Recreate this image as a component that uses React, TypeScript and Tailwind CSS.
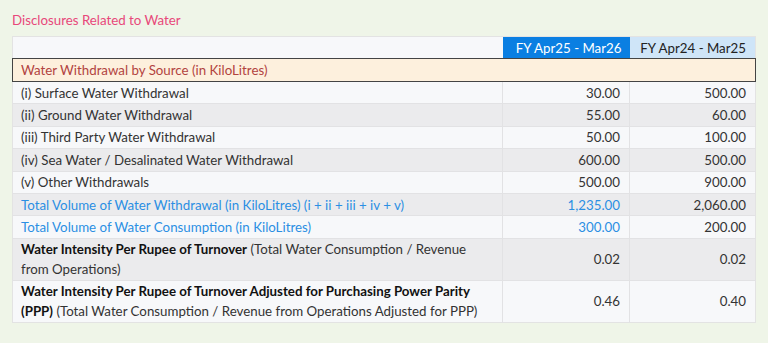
import React from 'react';

type Row = {
  label: React.ReactNode;
  cur: string;
  prev: string;
  blue?: boolean;
  tall?: boolean;
};

const rows: Row[] = [
  { label: '(i) Surface Water Withdrawal', cur: '30.00', prev: '500.00' },
  { label: '(ii) Ground Water Withdrawal', cur: '55.00', prev: '60.00' },
  { label: '(iii) Third Party Water Withdrawal', cur: '50.00', prev: '100.00' },
  { label: '(iv) Sea Water / Desalinated Water Withdrawal', cur: '600.00', prev: '500.00' },
  { label: '(v) Other Withdrawals', cur: '500.00', prev: '900.00' },
  {
    label: 'Total Volume of Water Withdrawal (in KiloLitres) (i + ii + iii + iv + v)',
    cur: '1,235.00',
    prev: '2,060.00',
    blue: true,
  },
  { label: 'Total Volume of Water Consumption (in KiloLitres)', cur: '300.00', prev: '200.00', blue: true },
  {
    label: (
      <>
        <span className="font-bold text-[#111]">Water Intensity Per Rupee of Turnover</span> (Total Water Consumption /
        Revenue from Operations)
      </>
    ),
    cur: '0.02',
    prev: '0.02',
    tall: true,
  },
  {
    label: (
      <>
        <span className="font-bold text-[#111]">
          Water Intensity Per Rupee of Turnover Adjusted for Purchasing Power Parity (PPP)
        </span>{' '}
        (Total Water Consumption / Revenue from Operations Adjusted for PPP)
      </>
    ),
    cur: '0.46',
    prev: '0.40',
    tall: true,
  },
];

const App: React.FC = () => {
  return (
    <div
      className="w-[768px] h-[343px] bg-[#eff5e8] pt-[11px] pl-[12px] text-[13.3px] text-[#333]"
      style={{ fontFamily: 'Lato, "Open Sans", sans-serif' }}
    >
      <h2 className="text-[#e8487a] text-[13.3px] leading-[18px] mb-[7px]">Disclosures Related to Water</h2>
      <table className="w-[743px] border-collapse table-fixed border border-[#e3e3e3] bg-[#f7f8fa]">
        <colgroup>
          <col className="w-[490px]" />
          <col className="w-[127px]" />
          <col className="w-[126px]" />
        </colgroup>
        <thead>
          <tr>
            <th className="h-[22px] p-0 bg-[#f7f8fa]" />
            <th className="h-[22px] p-0 bg-[#0a7fe2] text-white font-normal text-right pr-[8px] leading-[18px]">
              FY Apr25 - Mar26
            </th>
            <th className="h-[22px] p-0 bg-[#cfe5f8] text-[#222] font-normal text-right pr-[9px] leading-[18px]">
              FY Apr24 - Mar25
            </th>
          </tr>
        </thead>
        <tbody>
          <tr>
            <td
              colSpan={3}
              className="h-[23px] p-0 border border-[#444] bg-[#fdf0dd] text-[#b2433f] pl-[8px] leading-[18px]"
            >
              Water Withdrawal by Source (in KiloLitres)
            </td>
          </tr>
          {rows.map((r, i) => {
            const h = r.tall ? 'h-[40.5px] leading-[20.5px]' : 'h-[22.4px] leading-[18px]';
            return (
              <tr key={i} className={`${i % 2 === 0 ? 'bg-[#f7f8fa]' : 'bg-[#ebebed]'} border-t border-[#e2e2e4]`}>
                <td className={`${h} py-0 pl-[8px] pr-[8px] ${r.blue ? 'text-[#2b8fe3]' : ''}`}>{r.label}</td>
                <td className={`${h} py-0 pl-0 text-right pr-[9px] border-l border-[#e2e2e4] ${r.blue ? 'text-[#2b8fe3]' : ''}`}>
                  {r.cur}
                </td>
                <td className={`${h} py-0 pl-0 text-right pr-[9px] border-l border-[#e2e2e4]`}>{r.prev}</td>
              </tr>
            );
          })}
        </tbody>
      </table>
    </div>
  );
};

export default App;
